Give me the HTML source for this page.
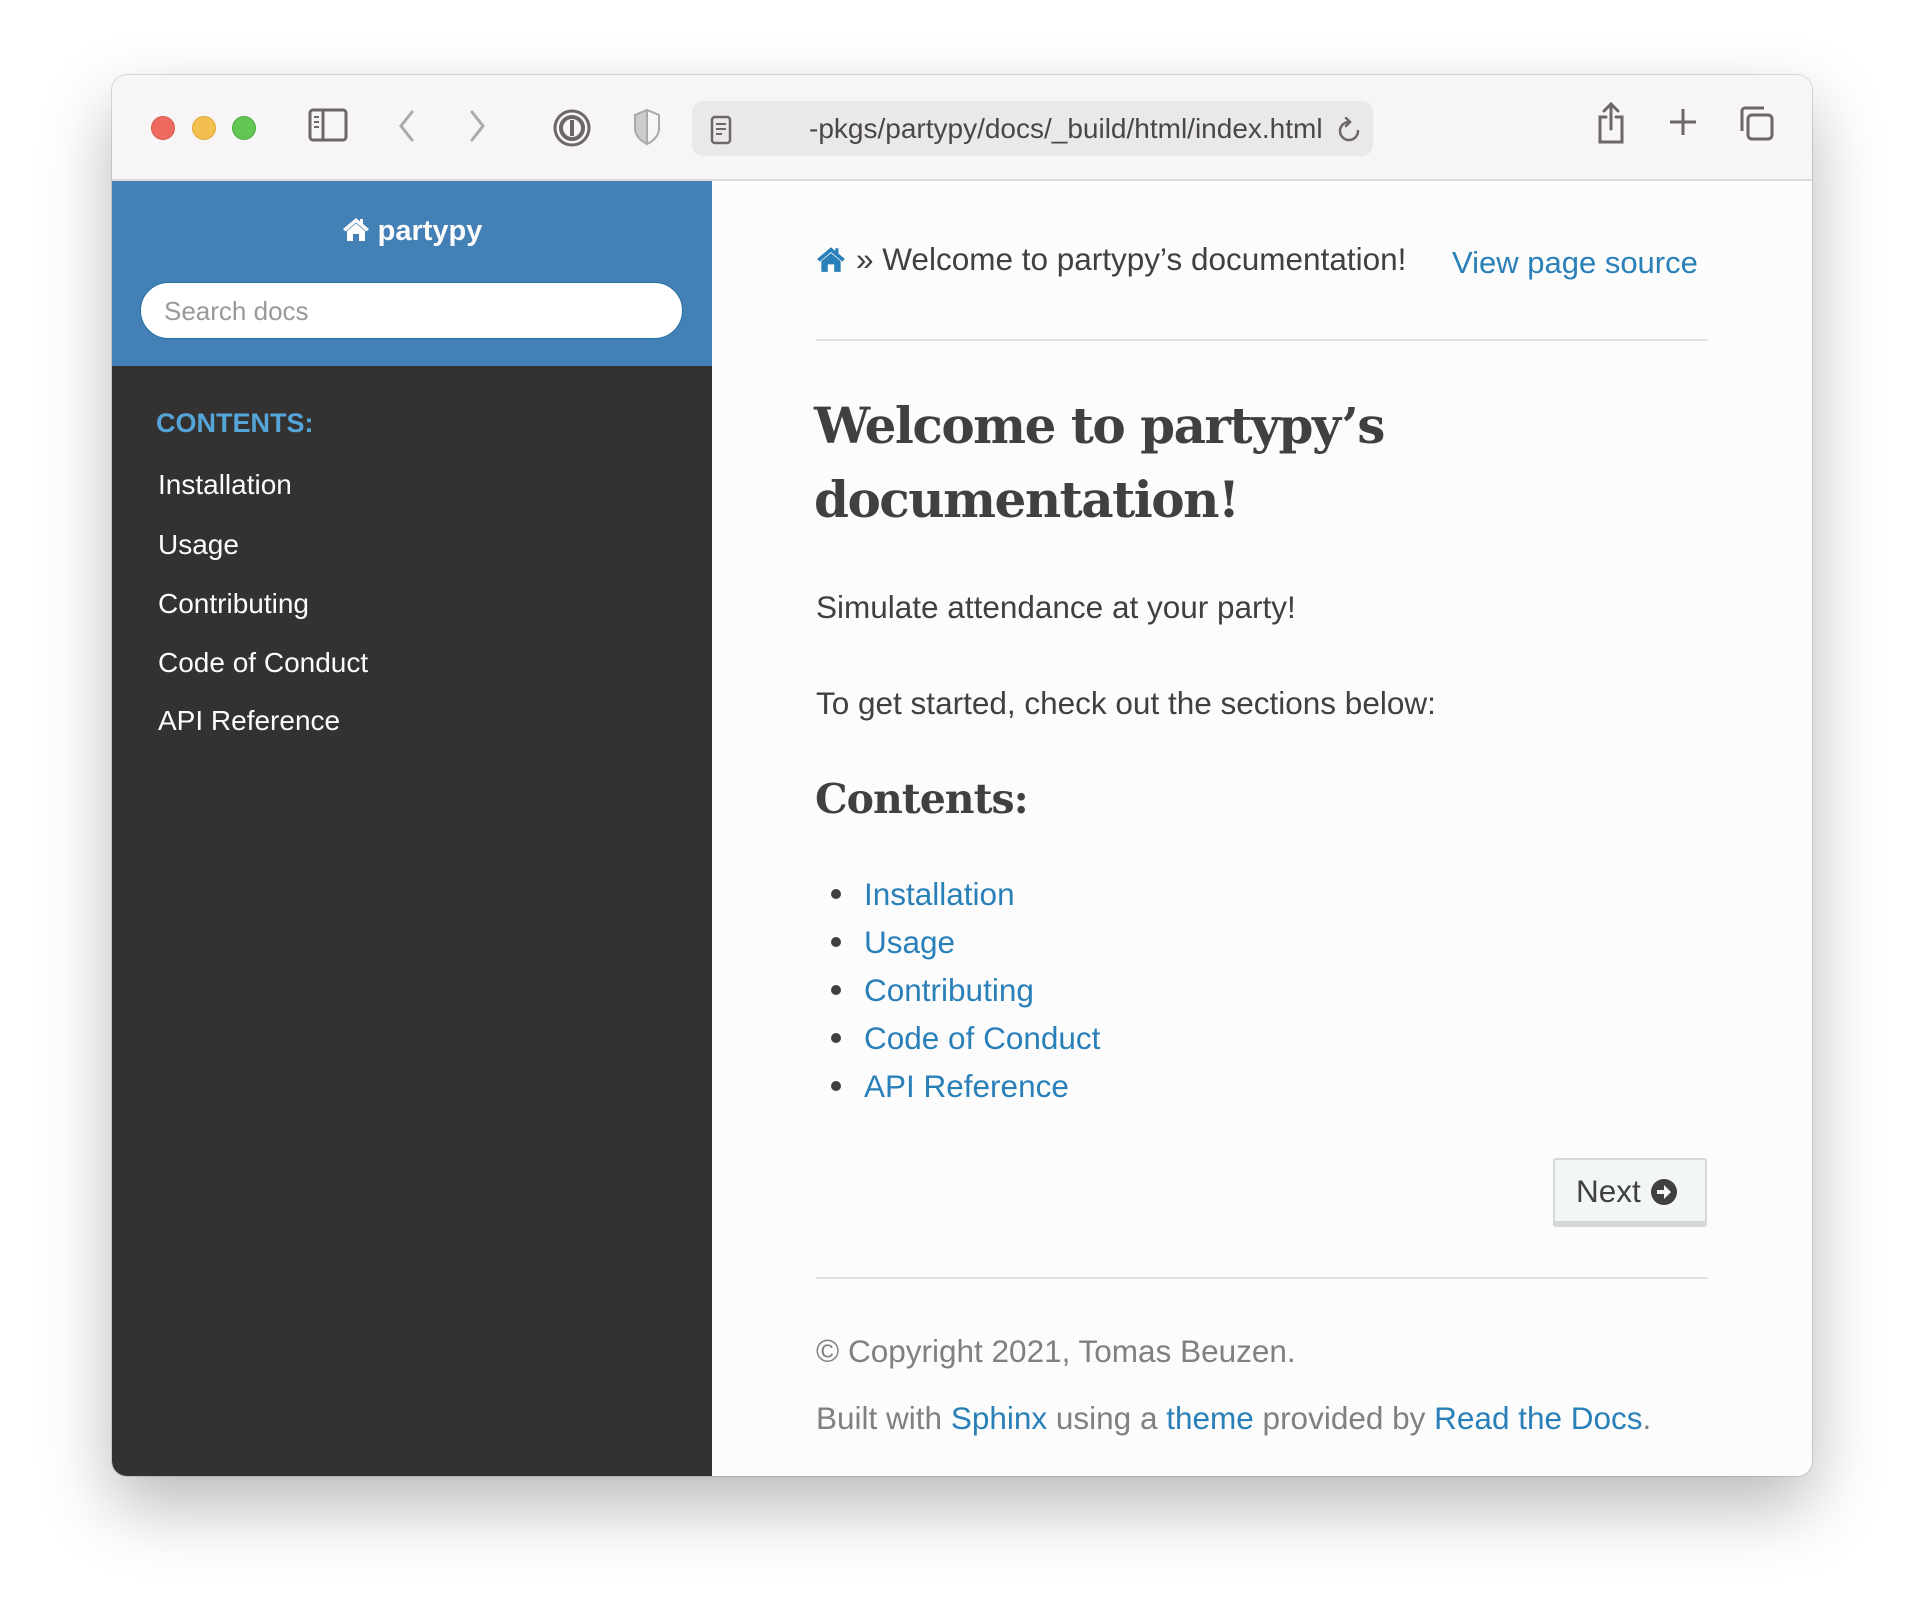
<!DOCTYPE html>
<html><head><meta charset="utf-8"><style>
*{margin:0;padding:0;box-sizing:border-box}
body{width:1924px;height:1624px;background:#fff;position:relative;overflow:hidden;font-family:"Liberation Sans",sans-serif}
.win{position:absolute;left:112px;top:75px;width:1700px;height:1401px;border-radius:15px;overflow:hidden;background:#fcfcfc;box-shadow:0 30px 70px rgba(0,0,0,.28),0 0 0 1px rgba(0,0,0,.12)}
.bar{position:absolute;left:0;top:0;width:1700px;height:106px;background:#f8f5f6;border-bottom:2px solid #dcdadb}
.dot{position:absolute;top:41px;width:24px;height:24px;border-radius:50%}
.ab{position:absolute;white-space:nowrap}
.side{position:absolute;left:0;top:106px;width:600px;height:1295px;background:#343131}
.sh{position:absolute;left:0;top:0;width:600px;height:185px;background:#4380b5}
.nav{position:absolute;left:46px;color:#fcfcfc;font-size:28px;line-height:40px}
.main{position:absolute;left:600px;top:106px;width:1100px;height:1295px;background:#fcfcfc}
.p{position:absolute;left:104px;color:#404040;font-size:31.5px;line-height:40px;white-space:nowrap}
.li{position:absolute;left:152px;color:#2980b9;font-size:31.5px;line-height:40px}
.bu{position:absolute;left:119px;width:10px;height:10px;border-radius:50%;background:#404040}
.hr{position:absolute;left:104px;width:892px;height:2px;background:#e1e4e5}
</style></head><body>
<div class="win">
 <div class="bar">
  <div class="dot" style="left:39px;background:#ee6a5f;border:1px solid #d85a50"></div>
  <div class="dot" style="left:80px;background:#f5bf4f;border:1px solid #dca840"></div>
  <div class="dot" style="left:120px;background:#62c655;border:1px solid #52ad47"></div>
  <svg class="ab" style="left:196px;top:32px" width="40" height="36" viewBox="0 0 40 36" fill="none" stroke="#6b6769" stroke-width="3"><rect x="2" y="3" width="36" height="30" rx="3"/><line x1="15" y1="3" x2="15" y2="33"/><line x1="6" y1="10" x2="11" y2="10" stroke-width="2"/><line x1="6" y1="15" x2="11" y2="15" stroke-width="2"/><line x1="6" y1="20" x2="11" y2="20" stroke-width="2"/></svg>
  <svg class="ab" style="left:284px;top:34px" width="20" height="34" viewBox="0 0 20 34" fill="none" stroke="#aaa" stroke-width="3" stroke-linecap="round"><path d="M16 3 L5 17 L16 31"/></svg>
  <svg class="ab" style="left:356px;top:34px" width="20" height="34" viewBox="0 0 20 34" fill="none" stroke="#aaa" stroke-width="3" stroke-linecap="round"><path d="M4 3 L15 17 L4 31"/></svg>
  <svg class="ab" style="left:440px;top:33px" width="40" height="40" viewBox="0 0 40 40"><circle cx="20" cy="20" r="17" fill="none" stroke="#6b6769" stroke-width="3"/><circle cx="20" cy="20" r="11" fill="none" stroke="#6b6769" stroke-width="4"/><rect x="18" y="12" width="4" height="16" fill="#6b6769"/></svg>
  <svg class="ab" style="left:520px;top:33px" width="30" height="38" viewBox="0 0 30 38"><path d="M15 2 L27 7 L27 20 C27 28 21 33 15 36 C9 33 3 28 3 20 L3 7 Z" fill="#ccc" stroke="#aaa" stroke-width="2"/><path d="M15 2 L27 7 L27 20 C27 28 21 33 15 36 Z" fill="#f8f5f6" stroke="#aaa" stroke-width="2"/></svg>
  <div class="ab" style="left:580px;top:26px;width:681px;height:55px;border-radius:11px;background:#ebe8e9"></div>
  <svg class="ab" style="left:598px;top:40px" width="22" height="30" viewBox="0 0 22 30" fill="none" stroke="#6b6769" stroke-width="2.5"><rect x="2" y="2" width="18" height="26" rx="3"/><line x1="6" y1="9" x2="16" y2="9" stroke-width="2"/><line x1="6" y1="14" x2="16" y2="14" stroke-width="2"/><line x1="6" y1="19" x2="12" y2="19" stroke-width="2"/></svg>
  <div class="ab" style="left:697px;top:37px;font-size:28px;line-height:34px;color:#4a4748">-pkgs/partypy/docs/_build/html/index.html</div>
  <svg class="ab" style="left:1224px;top:42px" width="26" height="28" viewBox="0 0 26 28" fill="none" stroke="#6b6769" stroke-width="2.5" stroke-linecap="round"><path d="M13 5 A9 9 0 1 0 22 14"/><path d="M10 1 L14 5 L10 9"/></svg>
  <svg class="ab" style="left:1484px;top:26px" width="30" height="44" viewBox="0 0 30 44" fill="none" stroke="#6b6769" stroke-width="3" stroke-linecap="round"><path d="M10 16 H4 V41 H26 V16 H20"/><path d="M15 3 V28"/><path d="M8 10 L15 3 L22 10"/></svg>
  <svg class="ab" style="left:1556px;top:32px" width="30" height="30" viewBox="0 0 30 30" stroke="#6b6769" stroke-width="3"><line x1="15" y1="2" x2="15" y2="28"/><line x1="2" y1="15" x2="28" y2="15"/></svg>
  <svg class="ab" style="left:1626px;top:30px" width="36" height="36" viewBox="0 0 36 36" fill="none" stroke="#6b6769" stroke-width="3"><rect x="10" y="10" width="24" height="24" rx="4"/><path d="M4 26 V6 a3 3 0 0 1 3 -3 H26"/></svg>
 </div>
 <div class="side">
  <div class="sh">
   <div class="ab" style="left:0;width:600px;top:30px;text-align:center;color:#fcfcfc;font-size:29px;line-height:40px;font-weight:bold">
    <svg width="28" height="26" viewBox="0 0 28 26" style="vertical-align:-2px"><path d="M14 2 L1 13 L3.5 15.5 L14 6.5 L24.5 15.5 L27 13 L21 8 V3 H18 V5.5 Z M5 15 V25 H11 V18 H17 V25 H23 V15 L14 7.5 Z" fill="#fcfcfc"/></svg> partypy</div>
   <div class="ab" style="left:28px;top:101px;width:543px;height:57px;border-radius:29px;background:#fff;border:1px solid #2472a4"></div>
   <div class="ab" style="left:52px;top:113px;font-size:26px;line-height:34px;color:#999">Search docs</div>
  </div>
  <div class="ab" style="left:44px;top:222px;color:#55a5d9;font-size:27px;line-height:40px;font-weight:bold">CONTENTS:</div>
  <div class="nav" style="top:284px">Installation</div>
  <div class="nav" style="top:344px">Usage</div>
  <div class="nav" style="top:403px">Contributing</div>
  <div class="nav" style="top:462px">Code of Conduct</div>
  <div class="nav" style="top:520px">API Reference</div>
 </div>
 <div class="main">
  <svg class="ab" style="left:104px;top:64px" width="30" height="28" viewBox="0 0 28 26"><path d="M14 2 L1 13 L3.5 15.5 L14 6.5 L24.5 15.5 L27 13 L21 8 V3 H18 V5.5 Z M5 15 V25 H11 V18 H17 V25 H23 V15 L14 7.5 Z" fill="#2980b9"/></svg>
  <div class="p" style="top:58px;left:144px">» Welcome to partypy’s documentation!</div>
  <div class="ab" style="left:740px;top:62px;font-size:31px;line-height:40px;color:#2980b9">View page source</div>
  <div class="hr" style="top:158px"></div>
  <div class="ab" style="left:102px;top:208px;font-family:'DejaVu Serif',serif;font-weight:bold;font-size:50px;line-height:74px;color:#404040;letter-spacing:-1.5px">Welcome to partypy’s<br>documentation!</div>
  <div class="p" style="top:406px">Simulate attendance at your party!</div>
  <div class="p" style="top:502px">To get started, check out the sections below:</div>
  <div class="ab" style="left:103px;top:590px;font-family:'DejaVu Serif',serif;font-weight:bold;font-size:41px;line-height:56px;color:#404040;letter-spacing:-1px">Contents:</div>
  <div class="bu" style="top:708px"></div><div class="li" style="top:693px">Installation</div>
  <div class="bu" style="top:756px"></div><div class="li" style="top:741px">Usage</div>
  <div class="bu" style="top:804px"></div><div class="li" style="top:789px">Contributing</div>
  <div class="bu" style="top:852px"></div><div class="li" style="top:837px">Code of Conduct</div>
  <div class="bu" style="top:900px"></div><div class="li" style="top:885px">API Reference</div>
  <div class="ab" style="left:841px;top:977px;width:154px;height:69px;background:#f3f6f6;border:2px solid #d5d8d8;border-bottom:6px solid #d5d8d8;border-radius:3px"></div>
  <div class="ab" style="left:864px;top:991px;font-size:31.5px;line-height:38px;color:#404040">Next <svg width="28" height="28" viewBox="0 0 28 28" style="vertical-align:-4px"><circle cx="14" cy="14" r="13" fill="#404040"/><path d="M7 12 H14 V7 L21 14 L14 21 V16 H7 Z" fill="#f3f6f6"/></svg></div>
  <div class="hr" style="top:1096px"></div>
  <div class="p" style="top:1150px;color:#808080">© Copyright 2021, Tomas Beuzen.</div>
  <div class="p" style="top:1217px;color:#808080">Built with <span style="color:#2980b9">Sphinx</span> using a <span style="color:#2980b9">theme</span> provided by <span style="color:#2980b9">Read the Docs</span>.</div>
 </div>
</div>
</body></html>
